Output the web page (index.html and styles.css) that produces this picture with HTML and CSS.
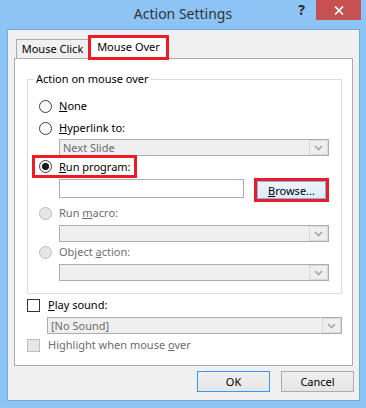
FILE: index.html
```html
<!DOCTYPE html>
<html>
<head>
<meta charset="utf-8">
<link rel="stylesheet" href="styles.css">
</head>
<body>
<div class="window">
  <div class="titlebar">
    <div></div>
    <div class="title">Action Settings</div>
    <div class="controls">
      <span class="help">?</span>
      <span class="close"><svg width="10" height="9" viewBox="0 0 10 9"><path d="M1 0.5L9 8.5M9 0.5L1 8.5" stroke="#fff" stroke-width="1.7" fill="none"/></svg></span>
    </div>
  </div>
  <div class="client">
    <div class="tabs">
      <div class="tab click">Mouse Click</div>
      <div class="tab active">Mouse Over</div>
    </div>
    <div class="panel">
      <fieldset class="group">
        <legend>Action on mouse over</legend>
        <div class="opt r-none"><span class="radio"></span><span class="lbl"><u>N</u>one</span></div>
        <div class="opt r-hyper"><span class="radio"></span><span class="lbl"><u>H</u>yperlink to:</span></div>
        <div class="combo c-hyper"><span class="ctext">Next Slide</span><span class="arrow"><svg width="9" height="6" viewBox="0 0 9 6"><path d="M1 1L4.5 4.5L8 1" stroke="#a6a6a6" stroke-width="1.6" fill="none"/></svg></span></div>
        <div class="opt hl r-prog"><span class="radio checked"></span><span class="lbl"><u>R</u>un program:</span></div>
        <div class="prog-row">
          <div class="input"></div>
          <div class="browse-wrap"><button class="browse"><u>B</u>rowse...</button></div>
        </div>
        <div class="opt dis r-macro"><span class="radio"></span><span class="lbl">Run <u>m</u>acro:</span></div>
        <div class="combo c-macro"><span class="ctext"></span><span class="arrow"><svg width="9" height="6" viewBox="0 0 9 6"><path d="M1 1L4.5 4.5L8 1" stroke="#a6a6a6" stroke-width="1.6" fill="none"/></svg></span></div>
        <div class="opt dis r-obj"><span class="radio"></span><span class="lbl">Object <u>a</u>ction:</span></div>
        <div class="combo c-obj"><span class="ctext"></span><span class="arrow"><svg width="9" height="6" viewBox="0 0 9 6"><path d="M1 1L4.5 4.5L8 1" stroke="#a6a6a6" stroke-width="1.6" fill="none"/></svg></span></div>
      </fieldset>
      <div class="chk-row c-play"><span class="check"></span><span class="lbl"><u>P</u>lay sound:</span></div>
      <div class="combo c-sound"><span class="ctext">[No Sound]</span><span class="arrow"><svg width="9" height="6" viewBox="0 0 9 6"><path d="M1 1L4.5 4.5L8 1" stroke="#a6a6a6" stroke-width="1.6" fill="none"/></svg></span></div>
      <div class="chk-row dis c-high"><span class="check"></span><span class="lbl">Highlight when mouse <u>o</u>ver</span></div>
    </div>
    <div class="buttons">
      <button class="btn default">OK</button>
      <button class="btn">Cancel</button>
    </div>
  </div>
</div>
</body>
</html>
```
FILE: styles.css
```css
* { box-sizing: border-box; }
html, body { margin: 0; padding: 0; }
body {
  width: 366px;
  height: 408px;
  overflow: hidden;
  font-family: "Noto Sans", "Open Sans", sans-serif;
  font-size: 11px;
  color: #000;
}
.window {
  width: 366px;
  height: 408px;
  background: #8cc4f5;
  display: flex;
  flex-direction: column;
  padding: 0 6px 7px 7px;
}
.titlebar {
  height: 29px;
  flex: none;
  display: grid;
  grid-template-columns: 1fr auto 1fr;
  align-items: start;
  margin: 0 -6px 0 -7px;
}
.title {
  font-size: 14px;
  line-height: 28px;
  color: #333;
}
.controls {
  display: flex;
  justify-content: flex-end;
  align-items: flex-start;
  padding-right: 5px;
}
.help {
  font-weight: bold;
  font-size: 14px;
  line-height: 20px;
  color: #2b2b2b;
  margin-right: 11px;
}
.close {
  width: 45px;
  height: 20px;
  background: #c75050;
  display: flex;
  align-items: center;
  justify-content: center;
}
.close svg { display: block; }
.client {
  flex: 1;
  background: #f0f0f0;
  border: 1px solid #74a8da;
  display: flex;
  flex-direction: column;
}
.tabs {
  display: flex;
  align-items: flex-end;
  margin: 5px 0 0 8px;
  position: relative;
  z-index: 1;
  height: 23px;
}
.tab {
  text-align: center;
  white-space: nowrap;
}
.tab.click {
  width: 72px;
  height: 19px;
  line-height: 17px;
  border: 1px solid #acacac;
  border-bottom: none;
  border-right: none;
  background: #f0f0f0;
}
.tab.active {
  width: 81px;
  height: 25px;
  line-height: 18px;
  border: 3px solid #ed1c24;
  background: #fff;
  margin-bottom: -2px;
}
.panel {
  margin: 0 6px;
  height: 308px;
  background: #fff;
  border: 1px solid #acacac;
  display: flex;
  flex-direction: column;
}
.group {
  margin: 12px 10px 0 12px;
  padding: 0 0 12px 0;
  border: 1px solid #dcdcdc;
  display: flex;
  flex-direction: column;
  align-items: flex-start;
}
.group legend {
  margin-left: 6px;
  padding: 0 2px;
  line-height: 16px;
}
.opt {
  display: flex;
  align-items: center;
  height: 16px;
  padding-left: 11px;
}
.radio {
  width: 13px;
  height: 13px;
  border-radius: 50%;
  border: 1px solid #3c3c3c;
  background: #fff;
  margin-right: 7px;
  flex: none;
}
.radio.checked {
  background: radial-gradient(circle, #1a1a1a 0, #1a1a1a 3.3px, #fff 3.9px);
}
.dis .radio {
  border-color: #bcbcbc;
  background: #e6e6e6;
}
.dis .lbl { color: #6d6d6d; }
.lbl { white-space: nowrap; line-height: 16px; }
.r-none { margin-top: 11px; }
.r-hyper { margin-top: 6px; }
.combo {
  display: flex;
  align-items: stretch;
  height: 17px;
  border: 1px solid #adadad;
  background: #efefef;
  color: #6d6d6d;
  align-self: stretch;
}
.ctext {
  flex: 1;
  padding-left: 3px;
  line-height: 15px;
}
.arrow {
  width: 19px;
  border: 1px solid #d9d9d9;
  display: flex;
  align-items: center;
  justify-content: center;
  background: #efefef;
}
.arrow svg { display: block; }
.group .combo { margin-left: 31px; margin-right: 12px; }
.c-hyper { margin-top: 3px; }
.opt.hl {
  height: 23px;
  border: 3px solid #ed1c24;
  margin-left: 4px;
  padding-left: 4px;
  padding-right: 3px;
  margin-top: -1px;
}
.prog-row {
  display: flex;
  align-items: flex-start;
  margin-left: 31px;
}
.input {
  width: 185px;
  height: 19px;
  margin-top: 1px;
  border: 1px solid #abadb3;
  background: #fff;
}
.browse-wrap {
  margin-left: 10px;
  width: 75px;
  height: 24px;
  border: 3px solid #ed1c24;
  display: flex;
}
.browse {
  flex: 1;
  margin: 0;
  padding: 0;
  font: inherit;
  color: #000;
  border: 1px solid #7eb4ea;
  background: linear-gradient(#ecf4fc, #dcecfc);
  line-height: 15px;
}
.r-macro { margin-top: 3px; }
.c-macro { margin-top: 4px; }
.r-obj { margin-top: 2px; }
.c-obj { margin-top: 4px; }
.chk-row {
  display: flex;
  align-items: center;
  height: 16px;
  margin-left: 12px;
}
.check {
  width: 13px;
  height: 13px;
  border: 1px solid #333;
  background: #fff;
  margin-right: 8px;
  flex: none;
}
.chk-row.dis .check {
  border-color: #bcbcbc;
  background: #e6e6e6;
}
.c-play { margin-top: 3px; }
.panel > .combo.c-sound { margin: 4px 10px 0 32px; }
.c-high { margin-top: 3px; }
.buttons {
  display: flex;
  justify-content: flex-end;
  gap: 11px;
  margin: 5px 5px 0 0;
}
.btn {
  width: 73px;
  height: 21px;
  margin: 0;
  padding: 0;
  font: inherit;
  color: #000;
  border: 1px solid #acacac;
  background: linear-gradient(#f0f0f0, #e5e5e5);
}
.btn.default { border-color: #3399ff; }
```
